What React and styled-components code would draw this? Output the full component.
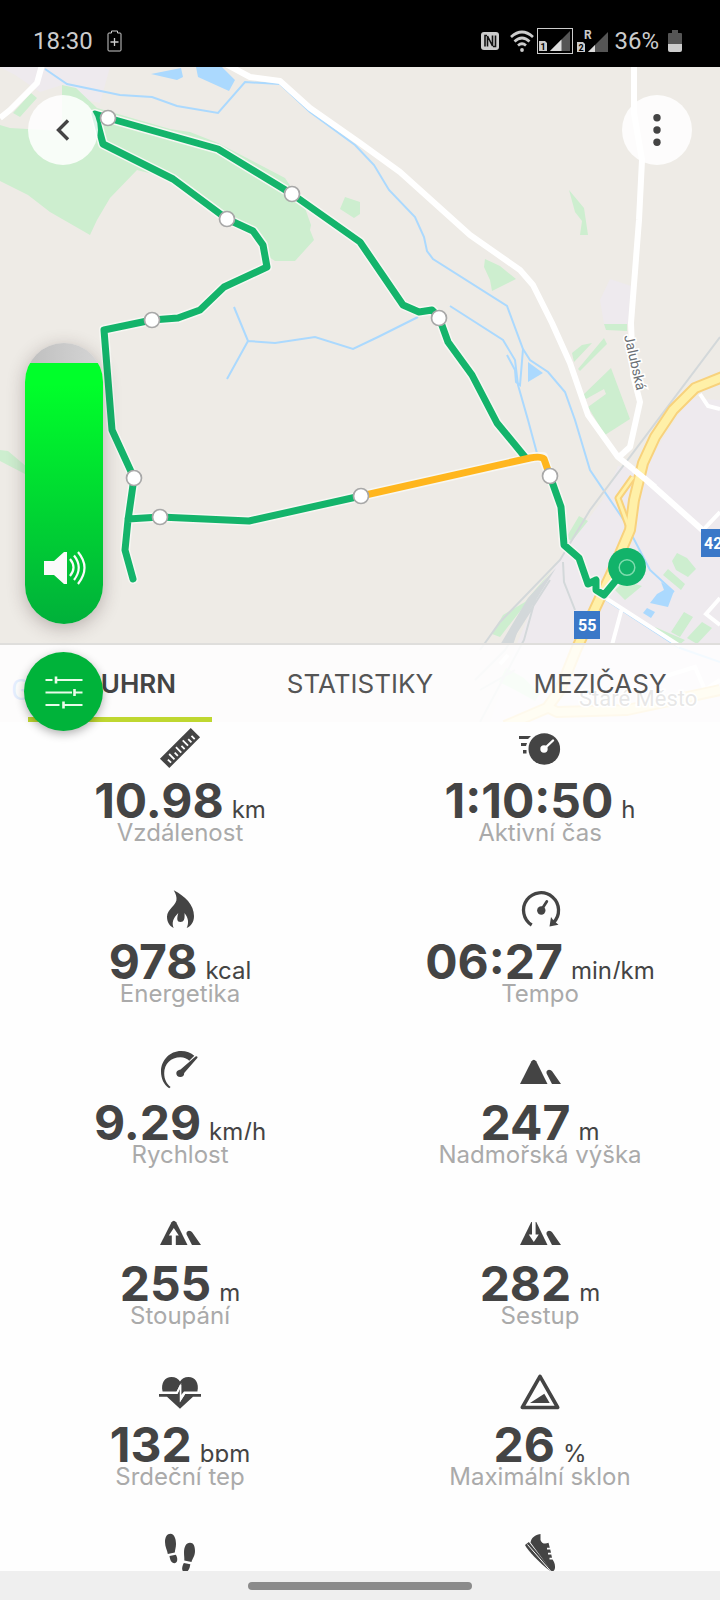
import React, { useState } from 'react';
import styled, { createGlobalStyle } from 'styled-components';

const GlobalStyle = createGlobalStyle`
  * {
    box-sizing: border-box;
  }

  body {
    margin: 0;
    background: #fefefe;
    font-family: Inter, "Open Sans", sans-serif;
    color: #444;
  }

  button {
    padding: 0;
    border: none;
    background: none;
    font-family: inherit;
    color: inherit;
    cursor: pointer;
  }

  svg {
    display: block;
  }
`;

const Screen = styled.div`
  height: 100vh;
  display: flex;
  flex-direction: column;
  overflow: hidden;
`;

const StatusBar = styled.header`
  height: 67px;
  flex-shrink: 0;
  display: flex;
  justify-content: space-between;
  align-items: center;
  padding: 15px 38px 0 33px;
  background: #000;
  color: #ccc;
  font-family: Roboto, sans-serif;
  font-size: 24px;
`;

const StatusGroup = styled.div`
  display: flex;
  align-items: center;
  gap: ${({ $gap }) => $gap}px;
`;

const MapPanel = styled.section`
  position: relative;
  z-index: 1;
  height: 655px;
  flex-shrink: 0;
  background: #eeebe6;
`;

const MapDrawing = styled.svg`
  width: 100%;
  height: 100%;
`;

const RoundButton = styled.button`
  position: absolute;
  top: 28px;
  ${({ $side }) => $side}: 28px;
  width: 70px;
  height: 70px;
  display: grid;
  place-items: center;
  border-radius: 50%;
  background: rgba(255, 255, 255, 0.86);
`;

const Volume = styled.label`
  position: absolute;
  top: 276px;
  left: 25px;
  width: 78px;
  height: 281px;
  border-radius: 39px;
  box-shadow: 0 4px 18px rgba(60, 40, 40, 0.3);

  svg {
    position: absolute;
    left: 18px;
    bottom: 38px;
    pointer-events: none;
  }
`;

const VolumeSlider = styled.input`
  appearance: none;
  display: block;
  width: 100%;
  height: 100%;
  margin: 0;
  border-radius: 39px;
  writing-mode: vertical-lr;
  direction: rtl;
  background:
    linear-gradient(to top, #00b03a, #00ff2a 92%) bottom / 100% ${({ value }) => value}% no-repeat,
    linear-gradient(to right, #bebebe, #d6d6d6);

  &::-webkit-slider-thumb {
    appearance: none;
    width: 78px;
    height: 1px;
    background: transparent;
  }
`;

const SettingsButton = styled.button`
  position: absolute;
  left: 24px;
  bottom: -9px;
  width: 79px;
  height: 79px;
  display: grid;
  place-items: center;
  border-radius: 50%;
  background: #00b33a;
  box-shadow: 0 3px 10px rgba(0, 0, 0, 0.3);
`;

const Tabs = styled.nav`
  position: absolute;
  left: 0;
  right: 0;
  bottom: 0;
  height: 79px;
  display: grid;
  grid-template-columns: repeat(3, 1fr);
  border-top: 2px solid #dfdedc;
  background: rgba(255, 255, 255, 0.86);
`;

const Tab = styled.button`
  margin: 0 28px;
  padding-top: 4px;
  border-bottom: 5px solid ${({ $active }) => ($active ? '#bfd730' : 'transparent')};
  font-size: 26px;
  font-weight: ${({ $active }) => ($active ? 600 : 400)};
  color: ${({ $active }) => ($active ? '#444' : '#555')};
`;

const Stats = styled.main`
  flex: 1;
  min-height: 0;
  overflow: hidden;
  display: grid;
  grid-template-columns: 1fr 1fr;
  grid-auto-rows: 161px;
`;

const Stat = styled.div`
  display: flex;
  flex-direction: column;
  align-items: center;
  padding-top: 5px;
`;

const Value = styled.div`
  display: flex;
  align-items: baseline;
  gap: 8px;
  height: 35px;
  margin-top: 14px;
  overflow: hidden;
  line-height: 35px;
`;

const Amount = styled.strong`
  font-size: 48px;
  font-weight: 700;
`;

const Unit = styled.span`
  font-size: 24px;
`;

const Label = styled.div`
  font-size: 24px;
  line-height: 30px;
  color: #aaa;
`;

const NavBar = styled.footer`
  height: 29px;
  flex-shrink: 0;
  display: grid;
  place-items: center;
  background: #efefef;
`;

const HomeHandle = styled.div`
  width: 224px;
  height: 8px;
  border-radius: 4px;
  background: #8b8b8b;
`;

const StatIcon = ({ children }) => (
  <svg width="42" height="42" viewBox="0 0 42 42" fill="#444" aria-hidden="true">
    {children}
  </svg>
);

const BigPeak = () => <path d="M1 35L12.5 12.3Q14.8 9.3 17.2 12.3L28.5 35Z" />;

const SmallPeak = () => <path d="M27.6 24.5Q26.8 21.3 30 20.8Q32.3 20.8 33.3 22.5L42 35H33Z" />;

const RulerIcon = () => (
  <StatIcon>
    <g transform="translate(10.3 41) rotate(-45)">
      <rect x="0" y="-13.2" width="43.5" height="13.2" />
      <path
        d="M5 -2.5V-7M9.8 -2.5V-10M14.6 -2.5V-7M19.4 -2.5V-10M24.2 -2.5V-7M29 -2.5V-10M33.8 -2.5V-7M38.4 -2.5V-7"
        stroke="#fefefe"
        strokeWidth="1.8"
      />
    </g>
  </StatIcon>
);

const TimerIcon = () => (
  <StatIcon>
    <path d="M0 9H12L9 12H0ZM2 16H8L7 19H2ZM4 23H7.5V26.5H4Z" />
    <circle cx="25.3" cy="22" r="15.8" />
    <circle cx="25" cy="22" r="3.7" fill="#fefefe" />
    <path d="M25 22L34 13.5" stroke="#fefefe" strokeWidth="2.4" strokeLinecap="round" />
  </StatIcon>
);

const FlameIcon = () => (
  <StatIcon>
    <path d="M14.7 2.3C26 8 35 17 35 28C35 34 32 38 27.7 40C30 35 29.5 30 25.5 25C26 31 25 34 21.5 34C18 34 17.5 31 19.3 25C14 30 12.5 35 14.7 40C10 37.5 8 33.5 8 28.7C8 21 18.5 17 17.5 10C17.2 7 16 4.5 14.7 2.3Z" />
  </StatIcon>
);

const PaceIcon = () => (
  <StatIcon>
    <path d="M12.7 37A17.5 17.5 0 1 1 34.5 34.5" fill="none" stroke="#444" strokeWidth="3.3" />
    <path d="M30.5 38.5L32 29L34.5 32.5L39.5 36.8Z" />
    <circle cx="22.3" cy="22.5" r="4.2" />
    <path d="M22.3 22L27.8 13.5" stroke="#444" strokeWidth="2.8" strokeLinecap="round" />
  </StatIcon>
);

const SpeedIcon = () => (
  <StatIcon>
    <path d="M10.2 39.3C4.5 35.5 2 29 2 22.5C2 11 11 2 22 2C27.5 2 32 3.7 35.3 6.8L30.3 11.7C28 9.5 25 8.3 21.5 8.3C12 8.3 5.2 15 5.2 24.3C5.2 30 7.5 35 11.6 38Z" />
    <path d="M18.2 22Q20 20.6 21.5 20.5L36.5 7.5Q38.8 6.5 38.5 8.7L25.2 24Q25.2 28 21.3 28Q17.4 27.8 17.3 24.3Q17.3 22.8 18.2 22Z" />
  </StatIcon>
);

const PeakIcon = () => (
  <StatIcon>
    <BigPeak />
    <SmallPeak />
  </StatIcon>
);

const AscentIcon = () => (
  <StatIcon>
    <BigPeak />
    <path d="M12.8 36V25.5H9.8L14.8 18L19.8 25.5H16.8V36Z" fill="#fefefe" />
    <SmallPeak />
  </StatIcon>
);

const DescentIcon = () => (
  <StatIcon>
    <path d="M1 35L12.3 12H17.3L28.5 35Z" />
    <path d="M13 10V24.5H9.8L14.8 32L19.8 24.5H16.600V10Z" fill="#fefefe" />
    <SmallPeak />
  </StatIcon>
);

const HeartIcon = () => (
  <StatIcon>
    <path d="M3.6 20.5C1.500 12 6 6 12.5 6C16.500 6 19.500 8 21 10.500C22.500 8 25.500 6 29.500 6C36 6 40.500 12 38.400 20.500H25L22.200 24V12L17.500 20.500Z" />
    <path d="M0 23H18.500L21 18V31L26.200 23H42V25.800H34L21 37.700L8 25.800H0Z" />
    <path d="M3 21.800H18L21.500 14V29L26 21.800H39" fill="none" stroke="#fefefe" strokeWidth="1.500" />
  </StatIcon>
);

const SlopeIcon = () => (
  <StatIcon>
    <path d="M21 5.3L38.7 36.5H3.3Z" fill="none" stroke="#444" strokeWidth="3.6" strokeLinejoin="round" />
    <path d="M11 32L25.3 22.8L30.7 32Z" />
  </StatIcon>
);

const StepsIcon = () => (
  <StatIcon>
    <path d="M6 10C6 5 8 1.7 11.5 1.7C15.5 2 17 7 17 12C17 15.5 16 17.5 15.8 20.5L8.8 22C8.3 18 6 15 6 10Z" />
    <path d="M10.5 24L16.8 22.8C18.5 25 19.4 31 15.5 31.2C12 31.2 11 27.5 10.5 24Z" />
    <path d="M36 19C36 14 34.5 10.7 31 10.7C27 10.7 25 15 25 20C25 24 25.5 26 25.3 28.5L32.5 30C33.2 27 36 24 36 19Z" />
    <path d="M31.3 32.3L24.9 31C23.5 33 21.5 39 25.5 40.2C29.5 40.5 30.8 36 31.3 32.3Z" />
  </StatIcon>
);

const ShoeIcon = () => (
  <StatIcon>
    <path d="M21.5 2C14.5 3.5 12.5 6 11.5 10.5L31.5 37.8C33.5 40.5 35.8 39 36 35.5C36.2 32 35 29.5 33.5 27.5H30.5V25.8H33L32.3 22.5H29V20.8H32L31.3 17.5H28V15.8H30.8L29.5 10.8C26 12.5 22.5 11.5 21.5 8Z" />
    <path d="M9.8 10L6 13C9 19 21 31.5 32.5 40L33 38.8Z" />
    <path d="M8.5 12.5L32 39.5" stroke="#fefefe" strokeWidth="1" />
  </StatIcon>
);

const stats = [
  { icon: RulerIcon, amount: '10.98', unit: 'km', label: 'Vzdálenost' },
  { icon: TimerIcon, amount: '1:10:50', unit: 'h', label: 'Aktivní čas' },
  { icon: FlameIcon, amount: '978', unit: 'kcal', label: 'Energetika' },
  { icon: PaceIcon, amount: '06:27', unit: 'min/km', label: 'Tempo' },
  { icon: SpeedIcon, amount: '9.29', unit: 'km/h', label: 'Rychlost' },
  { icon: PeakIcon, amount: '247', unit: 'm', label: 'Nadmořská výška' },
  { icon: AscentIcon, amount: '255', unit: 'm', label: 'Stoupání' },
  { icon: DescentIcon, amount: '282', unit: 'm', label: 'Sestup' },
  { icon: HeartIcon, amount: '132', unit: 'bpm', label: 'Srdeční tep' },
  { icon: SlopeIcon, amount: '26', unit: '%', label: 'Maximální sklon' },
  { icon: StepsIcon },
  { icon: ShoeIcon },
];

const tabs = ['SOUHRN', 'STATISTIKY', 'MEZIČASY'];

const kilometres = [
  [108, 118], [292, 194], [227, 219], [152, 320], [439, 318],
  [134, 478], [160, 517], [361, 496], [550, 476],
];

const loopPath =
  'M133 579L125 550L128 520L134 478L112 430L104 330L152 320L178 318L200 310L224 287L267 267L263 245L253 231L227 219L173 179L103 144L95 114L108 118L218 149L292 194L360 242L403 305L419 312L432 310L439 317L448 342L472 375L497 423L525 457';
const startPath = 'M550 476L561 507L564 545L579 558L588 584L596 580L596 590L604 595L627 567';
const returnPath = 'M128 519L160 517L249 521L361 496';
const fastPath = 'M361 496L530 458Q541 456 544 459L550 476';

const highway =
  'M725 376L695 388L673 410L655 437L643 463L634 500L630 530L613 570L593 613L576 650L560 690L547 708L505 726M549 708L557 712L627 710L720 690';

const RouteMap = () => (
  <MapDrawing viewBox="0 67 720 655" preserveAspectRatio="xMidYMin slice" role="img" aria-label="Mapa trasy">
    {/* built-up areas */}
    <g fill="#eeeaee">
      <path d="M0 67H110L100 103L85 100L62 85L40 92L15 75Z" />
      <path d="M610 279L600 300L604 324L628 324L631 286Z" />
      <path d="M720 400L690 398L662 440L645 470L618 466L606 495L567 548L540 590L512 655L490 722H720Z" />
    </g>

    {/* parks and forest */}
    <g fill="#cdeecf">
      <path d="M62 85L76 88L97 108L170 129L190 132L218 143L285 178L305 208L311 225L310 230L314 240L295 261L275 261L266 255L262 240L226 219L173 179L137 170L110 198L97 220L90 235L50 212L28 195L0 181V125L10 128L62 131Z" />
      <path d="M31 93L37 98L20 117L13 113ZM345 197L360 202V214L354 218L340 209Z" />
      <path d="M569 190L584 208L588 235H580L582 221L575 212ZM485 259L500 266L516 279L492 291L490 280L484 267Z" />
      <path d="M604 324H627V331L606 330ZM572 353L582 345L592 343L574 362ZM578 369L604 338L607 344L580 371Z" />
      <path d="M611 368L630 419L605 435L588 407L606 394L604 389L586 399L583 395Z" />
      <path d="M0 450L8 451L40 478L25 474L0 461ZM579 516L588 521L572 541L566 538Z" />
      <path d="M552 570L500 637L492 634L503 615L525 602ZM625 581L642 586L625 600L615 590Z" />
      <path d="M677 553L687 558L696 569L688 577L676 570L672 561ZM668 569L685 584L681 590L663 575ZM655 627L685 640L678 646L660 634ZM684 612L693 617L680 637L671 632ZM702 622L712 628L697 644L687 638Z" />
      <path d="M506 668L524 678L540 694L535 701L515 690L499 682Z" />
    </g>

    {/* streams and ponds */}
    <g fill="none" stroke="#abd9fe" strokeWidth="2">
      <path d="M45 69L67 84L120 95L152 97L177 106L218 113L245 82L280 84L310 112L355 145L374 165L389 190L415 217L424 237L427 251L433 259L507 306L523 349L530 360L548 372L565 392L575 420L590 470L625 522L650 570L674 592" />
      <path d="M450 306L503 340L515 360L518 385L528 420L538 457M234 307L248 341L275 343L315 337L353 349L378 337L418 317M248 341L227 379" />
      <path d="M523 349L520 385L516 382L515 370L507 355" />
      <path d="M603 598L680 648L720 662" />
    </g>
    <path
      d="M151 74L181 68L183 77L177 80ZM196 67H222L235 80L229 91L198 77ZM528 362L543 373L528 382ZM661 582L674 591L668 607L650 603L657 594L664 590ZM647 608L655 612L651 618L643 613Z"
      fill="#abd9fe"
    />

    {/* railway */}
    <g fill="none" stroke="#d3d8da" strokeWidth="2">
      <path d="M720 337L590 510L560 560L500 622L480 650M563 562L564 582L575 610" />
      <path d="M550 580L505 650L475 680M535 600L524 640L480 722M515 670L480 690" />
    </g>
    <path d="M556 568L528 598L500 645H513L518 630L536 600Z" fill="#d3d8da" />

    {/* local roads */}
    <g fill="none" stroke="#fff" strokeWidth="4">
      <path d="M700 394L708 406L720 409M703 530L720 512M720 598L706 614L720 625M604 597L680 646M622 608L612 645" />
      <path d="M500 664L508 655M650 681L695 667L705 690L720 680" />
    </g>
    <g fill="none" stroke="#fff" strokeWidth="6" strokeLinejoin="round">
      <path d="M42 65L37 83L10 110L0 118" />
      <path d="M222 62L250 77L280 81L310 108L360 143L400 172L470 235L520 270L533 285L552 323L570 363L588 415L618 457L643 477L708 535" />
      <path d="M634 65V113L642 160L639 220L631 323L633 375L640 402L630 447L619 457" />
    </g>

    {/* main roads */}
    <g fill="none" strokeLinejoin="round">
      <g stroke="#f8d27c">
        <path d={highway} strokeWidth="12" />
        <path d="M633 477L618 498L628 525" strokeWidth="7" />
      </g>
      <g stroke="#fff0a8">
        <path d={highway} strokeWidth="8" />
        <path d="M633 477L618 498L628 525" strokeWidth="3" />
      </g>
      <path d="M634 470L655 487" stroke="#fff" strokeWidth="6" />
    </g>

    {/* track */}
    <g fill="none" strokeLinejoin="round" strokeLinecap="round">
      <path d={`${loopPath}${returnPath}L535 457L543 457L550 476${startPath}`} stroke="#f7f7f3" strokeWidth="10" />
      <path d={`${loopPath}${startPath}${returnPath}`} stroke="#14b46b" strokeWidth="7" />
      <path d={fastPath} stroke="#ffb61e" strokeWidth="7" />
    </g>
    {kilometres.map(([x, y]) => (
      <circle key={`${x}-${y}`} cx={x} cy={y} r="7.5" fill="#fff" stroke="#a8a8a8" strokeWidth="1.7" />
    ))}
    <circle cx="627" cy="567" r="19" fill="#12b36a" />
    <circle cx="627" cy="567.5" r="7.8" fill="none" stroke="#7fdcae" strokeWidth="1.5" />

    {/* place names and road numbers */}
    <g fontFamily="Roboto, sans-serif">
      <text
        transform="translate(624 336) rotate(77)"
        fontSize="14"
        fill="#6b7075"
        stroke="#fff"
        strokeWidth="3"
        paintOrder="stroke"
      >
        Jalubská
      </text>
      <g fontSize="16" fontWeight="700" fill="#fff">
        <rect x="574" y="611" width="26" height="28" fill="#3a78c8" />
        <text x="578" y="631">55</text>
        <rect x="701" y="529" width="35" height="28" fill="#3a78c8" />
        <text x="704" y="549">42</text>
      </g>
      <text x="579" y="706" fontSize="22" fill="#555" stroke="#fff" strokeWidth="3" paintOrder="stroke">
        Staré Město
      </text>
      <text x="11" y="700" fontSize="29" fill="#4285f4">
        Googl<tspan fill="#ea4335">e</tspan>
      </text>
    </g>
  </MapDrawing>
);

const PhoneStatus = () => (
  <StatusBar>
    <StatusGroup $gap={14}>
      <span>18:30</span>
      <svg width="15" height="22" viewBox="0 0 15 22" fill="none" stroke="#ccc">
        <path d="M1 4Q1 3 2 3H4.5V1H10.5V3H13Q14 3 14 4V20Q14 21 13 21H2Q1 21 1 20Z" />
        <path d="M7.5 8V16M3.5 12H11.5" strokeWidth="1.3" />
      </svg>
    </StatusGroup>
    <StatusGroup $gap={3}>
      <svg width="26" height="22" viewBox="0 0 26 22">
        <rect y="2" width="18" height="18" rx="3" fill="#ccc" />
        <path d="M6 5.5H4V16.5M6.5 16.5V6L11.5 16V5.5M12 16.5H14.5V5.5" fill="none" stroke="#111" strokeWidth="1.6" />
      </svg>
      <svg width="24" height="24" viewBox="0 0 24 24" fill="none" stroke="#ccc" strokeWidth="2.7">
        <path d="M1 8Q12 -2 23 8M4.5 12.5Q12 5.5 19.5 12.5M8 16.5Q12 13 16 16.5" />
        <circle cx="12" cy="21" r="1.9" fill="#ccc" stroke="none" />
      </svg>
      <svg width="36" height="26" viewBox="0 0 36 26">
        <rect x=".5" y=".5" width="35" height="25" fill="none" stroke="#ccc" />
        <path d="M33 3V23H13Z" fill="#555" />
        <path d="M24.5 11.5V23H13Z" fill="#ddd" />
        <path d="M2 13H8L10 15V23H2Z" fill="#ccc" />
        <text x="3.5" y="21.5" fontSize="9" fontWeight="700" fill="#000">1</text>
      </svg>
      <svg width="35" height="26" viewBox="0 0 35 26">
        <path d="M32 4V24H12Z" fill="#555" />
        <path d="M19 17V24H12Z" fill="#ddd" />
        <path d="M1 14H7L9 16V24H1Z" fill="#ccc" />
        <text x="2.5" y="22.5" fontSize="9" fontWeight="700" fill="#000">2</text>
        <text x="8" y="11" fontSize="12" fontWeight="700" fill="#ccc">R</text>
      </svg>
      <span>36%</span>
      <svg width="20" height="22" viewBox="0 0 20 22">
        <path d="M6 4Q6 3 7 3H10V0H16V3H19Q20 3 20 4V14H6Z" fill="#555" />
        <path d="M6 14H20V20Q20 22 18 22H8Q6 22 6 20Z" fill="#ccc" />
      </svg>
    </StatusGroup>
  </StatusBar>
);

const App = () => {
  const [activeTab, setActiveTab] = useState('SOUHRN');
  const [volume, setVolume] = useState(93);

  return (
    <Screen>
      <GlobalStyle />
      <PhoneStatus />
      <MapPanel>
        <RouteMap />
        <RoundButton $side="left" aria-label="Zpět">
          <svg width="20" height="24" viewBox="0 0 20 24" fill="none" stroke="#444" strokeWidth="3.4">
            <path d="M15 2.5L5.500 12L15 21.5" />
          </svg>
        </RoundButton>
        <RoundButton $side="right" aria-label="Další možnosti">
          <svg width="10" height="34" viewBox="0 0 10 34" fill="#444">
            <circle cx="5" cy="4.7" r="3.7" />
            <circle cx="5" cy="17" r="3.7" />
            <circle cx="5" cy="29.3" r="3.7" />
          </svg>
        </RoundButton>
        <Tabs>
          {tabs.map((tab) => (
            <Tab key={tab} $active={tab === activeTab} onClick={() => setActiveTab(tab)}>
              {tab}
            </Tab>
          ))}
        </Tabs>
        <Volume>
          <VolumeSlider
            type="range"
            aria-label="Hlasitost"
            value={volume}
            onChange={(e) => setVolume(Number(e.target.value))}
          />
          <svg width="44" height="36" viewBox="0 0 44 36" fill="#fafafa">
            <path d="M1 11H11L21 2H24V34H21L11 25H1Z" />
            <path d="M27 9Q34 17.5 27 26M31 5.5Q40.5 17.5 31 30M35 2Q48 17.5 35 34" fill="none" stroke="#fafafa" strokeWidth="2.2" />
          </svg>
        </Volume>
        <SettingsButton aria-label="Nastavení">
          <svg width="38" height="34" viewBox="0 0 38 34" fill="none" stroke="#e9fbe9" strokeWidth="2.2">
            <path d="M.5 5H7.5M11 5H37.5M.5 17.5H27M30 17.5H37.5M.5 30H14.5M18.5 30H37.5" />
            <path d="M11 1.5V8.5M29.5 14V21M18.5 26.5V33.5" strokeWidth="2.6" />
          </svg>
        </SettingsButton>
      </MapPanel>
      <Stats>
        {stats.map(({ icon: Icon, amount, unit, label }, index) => (
          <Stat key={index}>
            <Icon />
            {label && (
              <>
                <Value>
                  <Amount>{amount}</Amount>
                  <Unit>{unit}</Unit>
                </Value>
                <Label>{label}</Label>
              </>
            )}
          </Stat>
        ))}
      </Stats>
      <NavBar>
        <HomeHandle />
      </NavBar>
    </Screen>
  );
};

export default App;
